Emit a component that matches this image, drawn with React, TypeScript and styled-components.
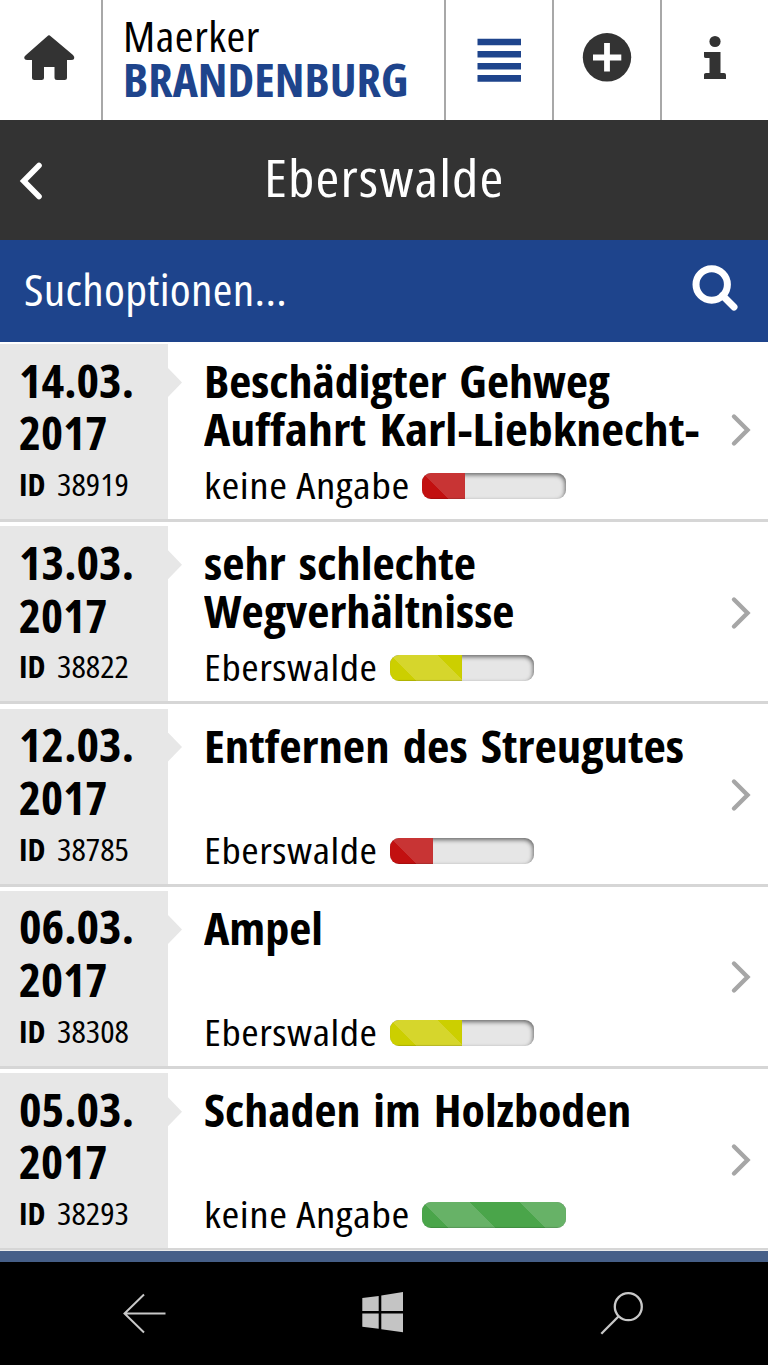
import React, { useLayoutEffect, useRef, useState } from "react";
import styled, { createGlobalStyle } from "styled-components";

const GlobalStyle = createGlobalStyle`
  * { box-sizing: border-box; }
  body {
    margin: 0;
    background: #000;
    font-family: "Open Sans", "Noto Sans", sans-serif;
    font-stretch: 75%;
    font-weight: 440;
    color: #000;
  }
`;

/* ---------- condensed text ---------- */

const FitBox = styled.span<{ $width: number }>`
  display: block;
  flex: none;
  width: ${(p) => p.$width}px;
  white-space: nowrap;
`;

const FitInner = styled.span`
  display: inline-block;
  transform-origin: 0 50%;
`;

/* Squeezes a line of text horizontally so that it fills the given width. */
function Condensed({ width, children }: { width: number; children: React.ReactNode }) {
  const ref = useRef<HTMLSpanElement>(null);
  const [scale, setScale] = useState(1);
  useLayoutEffect(() => {
    if (ref.current) setScale(width / ref.current.offsetWidth);
  }, [width, children]);
  return (
    <FitBox $width={width}>
      <FitInner ref={ref} style={{ transform: `scaleX(${scale})` }}>
        {children}
      </FitInner>
    </FitBox>
  );
}

/* ---------- top bar ---------- */

const Screen = styled.div`
  width: 768px;
  height: 1365px;
  display: flex;
  flex-direction: column;
  overflow: hidden;
  background: #fff;
`;

const TopBar = styled.header`
  height: 120px;
  flex: none;
  display: grid;
  grid-template-columns: 103px 343px 108px 108px 1fr;
`;

const TopCell = styled.div`
  border-right: 2px solid #a8a8a8;
  display: flex;
  &:last-child { border-right: 0; }
  svg { display: block; }
`;

const Brand = styled(TopCell)`
  flex-direction: column;
  padding: 14px 0 0 20px;
`;

const BrandTop = styled.div`
  font-size: 42px;
  line-height: 44px;
  letter-spacing: 0.5px;
`;

const BrandMain = styled.div`
  font-size: 47px;
  font-weight: 700;
  line-height: 43px;
  color: #1e448c;
`;

/* ---------- title and search ---------- */

const TitleBar = styled.div`
  height: 120px;
  flex: none;
  display: flex;
  background: #333;
  color: #fff;
  font-size: 51px;
  line-height: 115px;
  letter-spacing: 1px;
  svg { flex: none; margin-right: 200px; }
`;

const SearchBar = styled.div`
  height: 102px;
  flex: none;
  display: flex;
  justify-content: space-between;
  padding-left: 24px;
  background: #1e448c;
  color: #fff;
  font-size: 43px;
  line-height: 99px;
  letter-spacing: 0.3px;
`;

/* ---------- list ---------- */

const List = styled.main`
  height: 911px;
  flex: none;
  margin-top: -2.4px;
  clip-path: inset(2.4px 0 0 0);
`;

const Row = styled.article`
  height: 182.3px;
  padding-top: 4.4px;
  border-bottom: 3px solid #d6d6d6;
  display: flex;
  background: #fff;
`;

const DateCol = styled.div`
  position: relative;
  width: 168px;
  flex: none;
  padding: 9.5px 0 0 19px;
  background: #e7e7e7;
  &::after {
    content: "";
    position: absolute;
    left: 168px;
    top: 24px;
    width: 14px;
    height: 29px;
    background: #e7e7e7;
    clip-path: polygon(0 0, 100% 50%, 0 100%);
  }
`;

const DateLine = styled.div`
  font-size: 46.5px;
  font-weight: 700;
  line-height: 52.8px;
`;

const IdLine = styled.div`
  display: flex;
  gap: 11px;
  font-size: 31px;
  line-height: 51px;
  b { font-weight: 700; }
`;

const Body = styled.div`
  flex: 1;
  padding: 13px 0 0 36px;
`;

const Title = styled.h2`
  margin: 0;
  height: 102px;
  font-size: 44.5px;
  font-weight: 700;
  line-height: 48px;
  word-spacing: 4px;
`;

const Meta = styled.div`
  display: flex;
  align-items: center;
  gap: 12px;
  height: 52px;
  font-size: 37px;
  line-height: 52px;
  letter-spacing: 0.5px;
`;

const tones = {
  red: ["#c21010", "#c83434"],
  yellow: ["#cccf00", "#d6d62c"],
  green: ["#4aa54a", "#67b267"],
};
type Tone = keyof typeof tones;

const Track = styled.div`
  width: 144px;
  height: 26px;
  margin-top: 2px;
  border-radius: 9px;
  overflow: hidden;
  background: #e6e6e6;
  box-shadow: inset -1px 2px 4px rgba(0, 0, 0, 0.55);
`;

const Fill = styled.div<{ $tone: Tone; $width: number }>`
  width: ${(p) => p.$width}px;
  height: 26px;
  background: repeating-linear-gradient(
    45deg,
    ${(p) => tones[p.$tone][0]} 0 18.4px,
    ${(p) => tones[p.$tone][1]} 18.4px 52.3px,
    ${(p) => tones[p.$tone][0]} 52.3px 69px
  );
  box-shadow: inset 0 -1px 1px rgba(0, 0, 0, 0.15);
`;

const Chevron = styled.svg`
  flex: none;
  align-self: center;
  margin: -2px 16px 0 0;
`;

const Strip = styled.div`
  height: 11.4px;
  flex: none;
  background: #465f88;
`;

const NavBar = styled.nav`
  flex: 1;
  display: flex;
  justify-content: space-between;
  padding: 20px 121px 0 119px;
  background: #000;
`;

interface Report {
  day: string;
  id: string;
  title: [string, number][];
  place: string;
  placeWidth: number;
  tone: Tone;
  fill: number;
}

const reports: Report[] = [
  { day: "14.03.", id: "38919", title: [["Beschädigter Gehweg", 406], ["Auffahrt Karl-Liebknecht-", 496]], place: "keine Angabe", placeWidth: 206, tone: "red", fill: 43 },
  { day: "13.03.", id: "38822", title: [["sehr schlechte", 272], ["Wegverhältnisse", 310]], place: "Eberswalde", placeWidth: 174, tone: "yellow", fill: 72 },
  { day: "12.03.", id: "38785", title: [["Entfernen des Streugutes", 480]], place: "Eberswalde", placeWidth: 174, tone: "red", fill: 43 },
  { day: "06.03.", id: "38308", title: [["Ampel", 119]], place: "Eberswalde", placeWidth: 174, tone: "yellow", fill: 72 },
  { day: "05.03.", id: "38293", title: [["Schaden im Holzboden", 427]], place: "keine Angabe", placeWidth: 206, tone: "green", fill: 144 },
];

function ReportRow({ r }: { r: Report }) {
  return (
    <Row>
      <DateCol>
        <DateLine><Condensed width={115}>{r.day}</Condensed></DateLine>
        <DateLine><Condensed width={88}>2017</Condensed></DateLine>
        <IdLine>
          <Condensed width={27}><b>ID</b></Condensed>
          <Condensed width={72}>{r.id}</Condensed>
        </IdLine>
      </DateCol>
      <Body>
        <Title>
          {r.title.map(([text, width]) => (
            <Condensed key={text} width={width}>{text}</Condensed>
          ))}
        </Title>
        <Meta>
          <Condensed width={r.placeWidth}>{r.place}</Condensed>
          <Track><Fill $tone={r.tone} $width={r.fill} /></Track>
        </Meta>
      </Body>
      <Chevron width="22" height="34" viewBox="0 0 22 34">
        <path d="M4 3.5 17.5 17 4 30.500" fill="none" stroke="#a6a6a6" strokeWidth="4.4" strokeLinecap="round" />
      </Chevron>
    </Row>
  );
}

export default function App() {
  return (
    <>
      <GlobalStyle />
      <Screen>
        <TopBar>
          <TopCell>
            <svg width="101" height="120" viewBox="0 0 101 120" fill="#333">
              <path d="M47.300 36.200Q49 34.500 50.700 36.200L73 55Q75 57 74 59Q73.500 60 71 60H67V77.500Q67 80 64.500 80H57Q54.500 80 54.500 77.500V67H44V77.500Q44 80 41.500 80H34.500Q32 80 32 77.500V60H27Q24.500 60 24.200 58Q24 56.500 26 55Z" />
            </svg>
          </TopCell>
          <Brand>
            <BrandTop><Condensed width={137}>Maerker</Condensed></BrandTop>
            <BrandMain><Condensed width={286}>BRANDENBURG</Condensed></BrandMain>
          </Brand>
          <TopCell>
            <svg width="106" height="120" viewBox="446 0 106 120" fill="#1e448c">
              <path d="M477.500 38.800h43.500v6.500h-43.500zM477.500 50.900h43.500v6.700h-43.500zM477.500 63h43.500v6.500h-43.500zM477.500 75h43.500v6.700h-43.500z" />
            </svg>
          </TopCell>
          <TopCell>
            <svg width="106" height="120" viewBox="554 0 106 120">
              <circle cx="607" cy="57.300" r="24.200" fill="#333" />
              <path d="M593 57.500h28.300M607 43v28.600" stroke="#fff" strokeWidth="5.800" />
            </svg>
          </TopCell>
          <TopCell>
            <svg width="106" height="120" viewBox="662 0 106 120" fill="#333">
              <circle cx="715" cy="41.500" r="5.600" />
              <path d="M704 52H720.500V73H724Q726 73 726 75V79H704V74.500Q704 73 706 73H709.500V58H706Q704 58 704 56.500Z" />
            </svg>
          </TopCell>
        </TopBar>
        <TitleBar>
          <svg width="64" height="120" viewBox="0 120 64 120">
            <path d="M39 165.500 23.700 181 39 196.500" fill="none" stroke="#fff" strokeWidth="5.600" strokeLinecap="round" />
          </svg>
          <Condensed width={240}>Eberswalde</Condensed>
        </TitleBar>
        <SearchBar>
          <Condensed width={263}>Suchoptionen...</Condensed>
          <svg width="88" height="102" viewBox="680 240 88 102" fill="none" stroke="#fff" strokeWidth="7">
            <circle cx="711.700" cy="284.500" r="15.700" />
            <path d="M722.500 295.500 734 307" strokeLinecap="round" />
          </svg>
        </SearchBar>
        <List>
          {reports.map((r) => <ReportRow key={r.id} r={r} />)}
        </List>
        <Strip />
        <NavBar>
          <svg width="50" height="60" viewBox="120 1282 50 60" fill="none" stroke="#c8c8c8" strokeWidth="2">
            <path d="M145 1294.500 125.500 1313.500 145 1332.500M125.500 1313.500H166.500" />
          </svg>
          <svg width="50" height="60" viewBox="358 1282 50 60" fill="#c4c4c4">
            <path d="M362.300 1298 378.700 1296V1311H362.300ZM381.300 1295.400 403 1292V1311H381.300ZM362.300 1313.600H378.700V1328.700L362.300 1326.700ZM381.300 1313.600H403V1332.300L381.300 1329.300Z" />
          </svg>
          <svg width="50" height="60" viewBox="598 1282 50 60" fill="none" stroke="#c8c8c8" strokeWidth="2.300">
            <circle cx="629.300" cy="1306.700" r="13.500" />
            <path d="M619.700 1316.300 602.300 1333.700" />
          </svg>
        </NavBar>
      </Screen>
    </>
  );
}
